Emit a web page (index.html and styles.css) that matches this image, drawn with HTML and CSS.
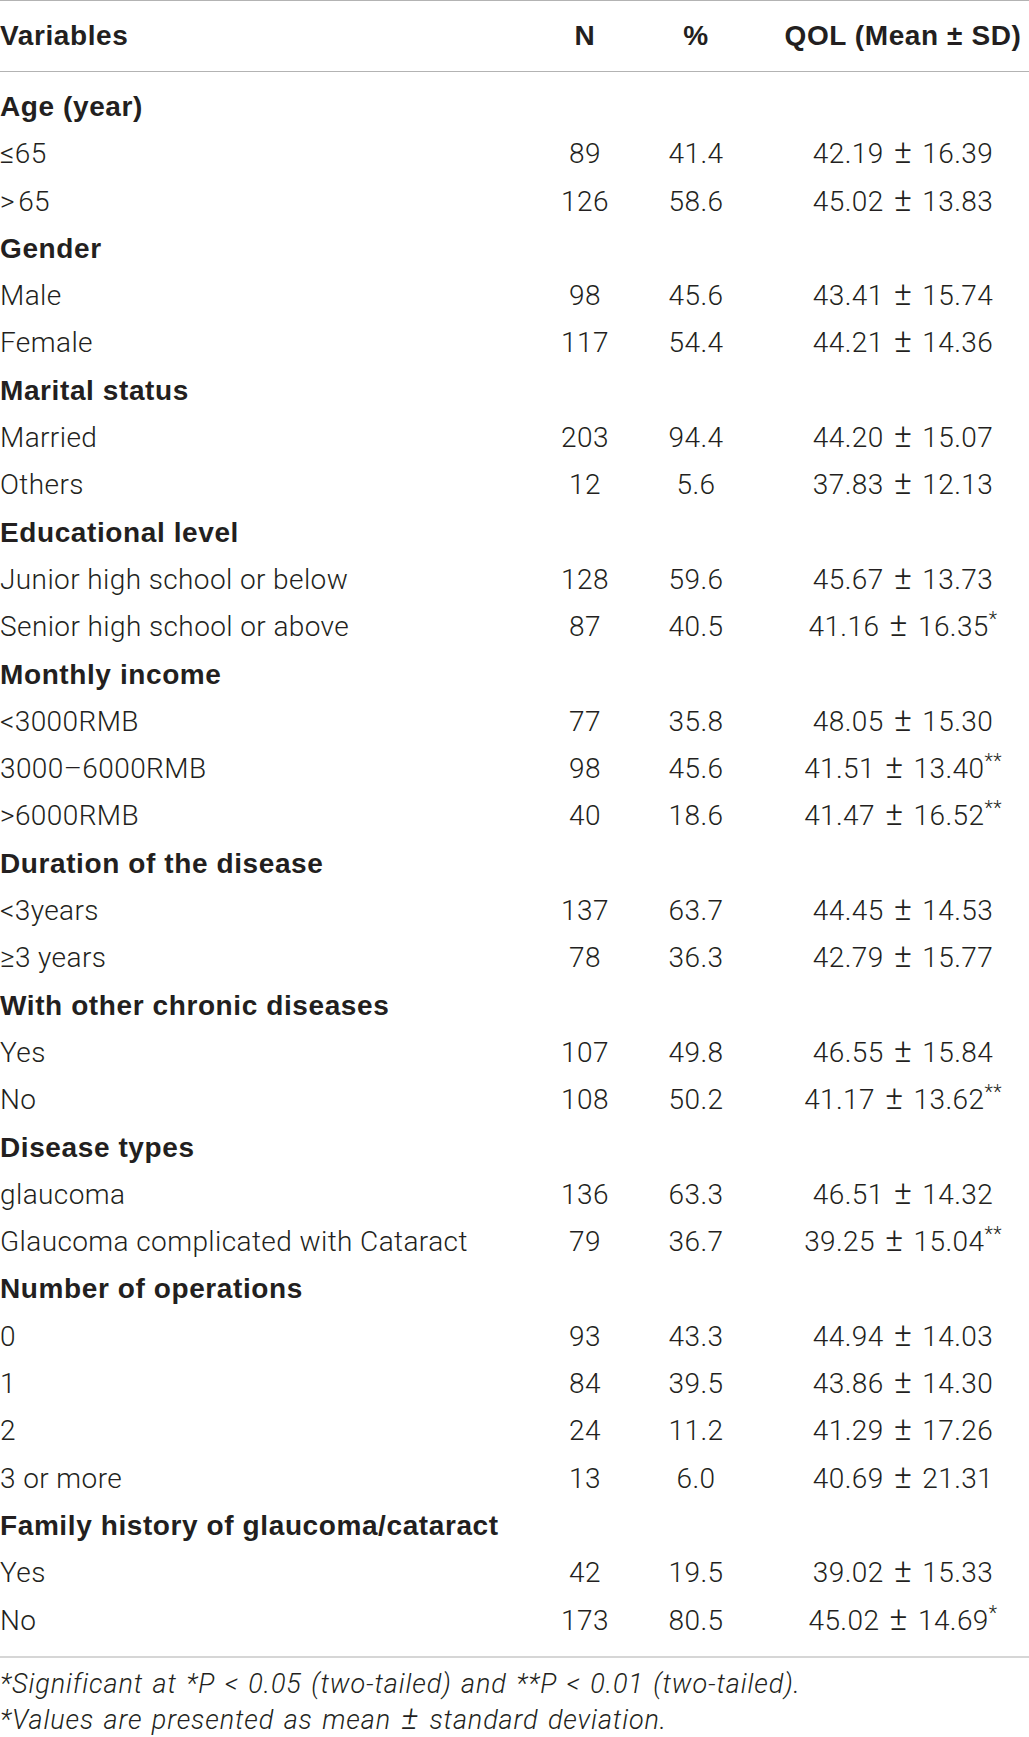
FILE: index.html
```html
<!DOCTYPE html>
<html lang="en">
<head>
  <meta charset="UTF-8" />
  <meta name="viewport" content="width=device-width, initial-scale=1.0" />
  <title>QOL by patient characteristics</title>
  <link rel="stylesheet" href="styles.css">
</head>
<body>

  <table class="qol">
    <colgroup>
      <col class="c-var">
      <col class="c-n">
      <col class="c-pct">
      <col class="c-qol">
    </colgroup>
    <thead>
      <tr>
        <th class="var">Variables</th>
        <th>N</th>
        <th>%</th>
        <th class="qol-col">QOL (Mean ± SD)</th>
      </tr>
    </thead>
    <tbody>
      <tr class="group first"><td colspan="4">Age (year)</td></tr>
      <tr><td>≤65</td><td>89</td><td>41.4</td><td class="qol-col">42.19 <span class="pm">±</span> 16.39</td></tr>
      <tr><td>&gt;&#8202;65</td><td>126</td><td>58.6</td><td class="qol-col">45.02 <span class="pm">±</span> 13.83</td></tr>

      <tr class="group"><td colspan="4">Gender</td></tr>
      <tr><td>Male</td><td>98</td><td>45.6</td><td class="qol-col">43.41 <span class="pm">±</span> 15.74</td></tr>
      <tr><td>Female</td><td>117</td><td>54.4</td><td class="qol-col">44.21 <span class="pm">±</span> 14.36</td></tr>

      <tr class="group"><td colspan="4">Marital status</td></tr>
      <tr><td>Married</td><td>203</td><td>94.4</td><td class="qol-col">44.20 <span class="pm">±</span> 15.07</td></tr>
      <tr><td>Others</td><td>12</td><td>5.6</td><td class="qol-col">37.83 <span class="pm">±</span> 12.13</td></tr>

      <tr class="group"><td colspan="4">Educational level</td></tr>
      <tr><td>Junior high school or below</td><td>128</td><td>59.6</td><td class="qol-col">45.67 <span class="pm">±</span> 13.73</td></tr>
      <tr><td>Senior high school or above</td><td>87</td><td>40.5</td><td class="qol-col">41.16 <span class="pm">±</span> 16.35<sup>*</sup></td></tr>

      <tr class="group"><td colspan="4">Monthly income</td></tr>
      <tr><td>&lt;3000RMB</td><td>77</td><td>35.8</td><td class="qol-col">48.05 <span class="pm">±</span> 15.30</td></tr>
      <tr><td>3000–6000RMB</td><td>98</td><td>45.6</td><td class="qol-col">41.51 <span class="pm">±</span> 13.40<sup>**</sup></td></tr>
      <tr><td>&gt;6000RMB</td><td>40</td><td>18.6</td><td class="qol-col">41.47 <span class="pm">±</span> 16.52<sup>**</sup></td></tr>

      <tr class="group"><td colspan="4">Duration of the disease</td></tr>
      <tr><td>&lt;3years</td><td>137</td><td>63.7</td><td class="qol-col">44.45 <span class="pm">±</span> 14.53</td></tr>
      <tr><td>≥3 years</td><td>78</td><td>36.3</td><td class="qol-col">42.79 <span class="pm">±</span> 15.77</td></tr>

      <tr class="group"><td colspan="4">With other chronic diseases</td></tr>
      <tr><td>Yes</td><td>107</td><td>49.8</td><td class="qol-col">46.55 <span class="pm">±</span> 15.84</td></tr>
      <tr><td>No</td><td>108</td><td>50.2</td><td class="qol-col">41.17 <span class="pm">±</span> 13.62<sup>**</sup></td></tr>

      <tr class="group"><td colspan="4">Disease types</td></tr>
      <tr><td>glaucoma</td><td>136</td><td>63.3</td><td class="qol-col">46.51 <span class="pm">±</span> 14.32</td></tr>
      <tr><td>Glaucoma complicated with Cataract</td><td>79</td><td>36.7</td><td class="qol-col">39.25 <span class="pm">±</span> 15.04<sup>**</sup></td></tr>

      <tr class="group"><td colspan="4">Number of operations</td></tr>
      <tr><td>0</td><td>93</td><td>43.3</td><td class="qol-col">44.94 <span class="pm">±</span> 14.03</td></tr>
      <tr><td>1</td><td>84</td><td>39.5</td><td class="qol-col">43.86 <span class="pm">±</span> 14.30</td></tr>
      <tr><td>2</td><td>24</td><td>11.2</td><td class="qol-col">41.29 <span class="pm">±</span> 17.26</td></tr>
      <tr><td>3 or more</td><td>13</td><td>6.0</td><td class="qol-col">40.69 <span class="pm">±</span> 21.31</td></tr>

      <tr class="group"><td colspan="4">Family history of glaucoma/cataract</td></tr>
      <tr><td>Yes</td><td>42</td><td>19.5</td><td class="qol-col">39.02 <span class="pm">±</span> 15.33</td></tr>
      <tr class="last"><td>No</td><td>173</td><td>80.5</td><td class="qol-col">45.02 <span class="pm">±</span> 14.69<sup>*</sup></td></tr>
    </tbody>
  </table>

  <div class="notes">
    <p>*Significant at *P &lt; 0.05 (two-tailed) and **P &lt; 0.01 (two-tailed).</p>
    <p>*Values are presented as mean <span class="pm">±</span> standard deviation.</p>
  </div>

</body>
</html>
```

FILE: styles.css
```css
body {
  margin: 0;
  background: #fff;
  color: #231f20;
  font-family: Roboto, "Liberation Sans", sans-serif;
  font-weight: 300;
}

.qol {
  width: 1029px;
  border-collapse: collapse;
  table-layout: fixed;
  font-size: 28px;
  letter-spacing: 0.4px;
}

.c-var { width: 530px; }
.c-n { width: 110px; }
.c-pct { width: 112px; }
.c-qol { width: 277px; }

th {
  height: 70px;
  padding: 0;
  text-align: center;
  font-family: "Liberation Sans", sans-serif;
  font-weight: bold;
  letter-spacing: 0.6px;
  color: #231f20;
  border-top: 1px solid #b3b3b3;
  border-bottom: 1px solid #b3b3b3;
}

th.var {
  text-align: left;
}

td {
  padding: 0;
  line-height: 47.3px;
  text-align: center;
  white-space: nowrap;
}

td:first-child {
  text-align: left;
}

.qol-col {
  padding-left: 25px;
}

td.qol-col {
  padding-left: 25px;
}

.pm {
  font-size: 1.2em;
  line-height: 1;
  margin: 0 3px;
}

sup {
  font-size: 0.7em;
  line-height: 0;
  vertical-align: 0.5em;
}

.group td {
  font-family: "Liberation Sans", sans-serif;
  font-weight: bold;
  letter-spacing: 0.6px;
  text-align: left;
}

.first td {
  padding-top: 11px;
}

.last td {
  padding-bottom: 12px;
}

.notes {
  border-top: 2px solid #d6d6d6;
  padding-top: 8px;
  font-size: 27px;
  font-style: italic;
  letter-spacing: 0.9px;
  word-spacing: 2px;
  line-height: 36.5px;
}

.notes .pm {
  margin: 0 1px;
}

.notes p {
  margin: 0;
}
```
